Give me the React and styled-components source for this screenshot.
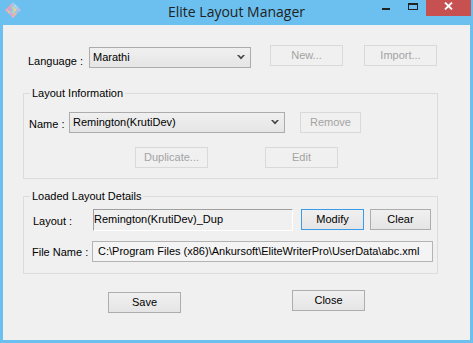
import React from "react";
import styled, { createGlobalStyle } from "styled-components";

const GlobalStyle = createGlobalStyle`
  html, body {
    margin: 0;
    padding: 0;
    background: #6bc0ef;
  }
  body {
    font-family: "Liberation Sans", Arial, sans-serif;
    font-size: 11px;
    color: #000;
  }
  * {
    box-sizing: border-box;
  }
`;

const Window = styled.div`
  width: 473px;
  height: 343px;
  background: #6bc0ef;
  display: flex;
  flex-direction: column;
  padding: 0 3px 3px;
`;

const TitleBar = styled.div`
  height: 25px;
  margin: 0 -3px;
  display: grid;
  grid-template-columns: 1fr auto 1fr;
  align-items: start;
`;

const IconSlot = styled.div`
  padding: 2px 0 0 5px;
  svg {
    display: block;
  }
`;

const Title = styled.div`
  font-family: "Open Sans", "Noto Sans", sans-serif;
  font-size: 14px;
  line-height: 20px;
  padding-top: 2px;
  color: #222;
  white-space: nowrap;
`;

const Controls = styled.div`
  justify-self: end;
  display: flex;
  margin-right: 2px;
`;

const CaptionButton = styled.div`
  width: ${(p) => p.$w}px;
  height: 16px;
  display: flex;
  justify-content: center;
  align-items: flex-start;
  padding-top: ${(p) => p.$pt}px;
  background: ${(p) => p.$bg || "transparent"};
`;

const MinGlyph = styled.div`
  width: 8px;
  height: 2px;
  background: #222;
`;

const MaxGlyph = styled.div`
  width: 10px;
  height: 7px;
  border: 1px solid #222;
  border-top-width: 2px;
`;

const Client = styled.div`
  flex: 1;
  background: #f0f0f0;
  padding: 20px 0 0 20px;
  display: flex;
  flex-direction: column;
`;

const Row = styled.div`
  display: flex;
  align-items: flex-start;
  margin-top: ${(p) => p.$mt || 0}px;
`;

const Label = styled.span`
  display: block;
  line-height: 13px;
  white-space: nowrap;
  width: ${(p) => p.$w}px;
  margin-left: ${(p) => p.$ml || 0}px;
  margin-top: ${(p) => p.$mt || 0}px;
`;

const Combo = styled.div`
  width: ${(p) => p.$w}px;
  height: 21px;
  margin-top: ${(p) => p.$mt || 0}px;
  border: 1px solid #acacac;
  background: linear-gradient(#f0f0f0, #e5e5e5);
  display: flex;
  align-items: center;
  justify-content: space-between;
  padding: 0 5px 0 3px;
  line-height: 13px;
  white-space: nowrap;
  svg {
    display: block;
  }
`;

const Button = styled.button`
  width: ${(p) => p.$w || 73}px;
  height: 21px;
  margin: ${(p) => p.$mt || 0}px 0 0 ${(p) => p.$ml || 0}px;
  padding: 0;
  font-family: inherit;
  font-size: 11px;
  line-height: 13px;
  color: #000;
  border: 1px solid ${(p) => (p.$focused ? "#3c9be8" : "#adadad")};
  border-radius: 0;
  background: linear-gradient(#f0f0f0, #e5e5e5);
  &:disabled {
    color: #a3a3a3;
    border-color: #d9d9d9;
    background: #f0f0f0;
  }
`;

const Group = styled.fieldset`
  width: 415px;
  min-width: 0;
  margin: ${(p) => p.$mt}px 0 0;
  padding: 0;
  border: 1px solid #dcdcdc;
`;

const Caption = styled.legend`
  margin-left: 6px;
  padding: 0 2px;
  line-height: 13px;
  font-size: 11px;
`;

const GroupBody = styled.div`
  padding: ${(p) => p.$pt}px 0 ${(p) => p.$pb}px;
`;

const SunkenField = styled.div`
  width: ${(p) => p.$w}px;
  height: 22px;
  border-style: solid;
  border-width: 1px;
  border-color: #a0a0a0 #ffffff #ffffff #a0a0a0;
  padding-top: 3px;
  line-height: 13px;
  white-space: nowrap;
`;

const TextField = styled.div`
  width: ${(p) => p.$w}px;
  height: 21px;
  border: 1px solid #b4b4b4;
  background: #f4f4f4;
  display: flex;
  align-items: center;
  padding-left: 5px;
  line-height: 13px;
  white-space: nowrap;
  overflow: hidden;
`;

const ComboArrow = () => (
  <svg width="8" height="5" viewBox="0 0 8 5">
    <path d="M0 0h2l2 2 2-2h2L4 4.5z" fill="#444" />
  </svg>
);

const AppIcon = () => {
  const colors = [
    "#9fc6e4", "#b8d6ea", "#a9cfe9", "#c6b7e4",
    "#e4a9c8", "#b2dcb0", "#f0d38a", "#9cc4ea",
    "#e6a0b8", "#c0a8e6", "#a8dcc4", "#f2b6a0",
    "#f0a6c0", "#e8c0a0", "#d8a8e0", "#eab0b8",
  ];
  return (
    <svg width="16" height="16" viewBox="0 0 16 16">
      <g transform="rotate(45 8 8) translate(2.4 2.4)">
        {colors.map((c, i) => (
          <rect
            key={i}
            x={(i % 4) * 2.8}
            y={Math.floor(i / 4) * 2.8}
            width="2.8"
            height="2.8"
            fill={c}
          />
        ))}
      </g>
    </svg>
  );
};

const CloseX = () => (
  <svg width="9" height="8" viewBox="0 0 9 8">
    <path d="M1 0.5L8 7.5M8 0.5L1 7.5" stroke="#fff" strokeWidth="1.8" />
  </svg>
);

export default function App() {
  return (
    <>
      <GlobalStyle />
      <Window>
        <TitleBar>
          <IconSlot>
            <AppIcon />
          </IconSlot>
          <Title>Elite Layout Manager</Title>
          <Controls>
            <CaptionButton $w={26} $pt={8}>
              <MinGlyph />
            </CaptionButton>
            <CaptionButton $w={27} $pt={3}>
              <MaxGlyph />
            </CaptionButton>
            <CaptionButton $w={45} $pt={2} $bg="#c75050">
              <CloseX />
            </CaptionButton>
          </Controls>
        </TitleBar>

        <Client>
          <Row>
            <Label $ml={5} $w={61} $mt={10}>Language :</Label>
            <Combo $w={162} $mt={2}>
              <span>Marathi</span>
              <ComboArrow />
            </Combo>
            <Button $ml={19} disabled>New...</Button>
            <Button $ml={21} disabled>Import...</Button>
          </Row>

          <Group $mt={19}>
            <Caption>Layout Information</Caption>
            <GroupBody $pt={12} $pb={10}>
              <Row>
                <Label $ml={5} $w={40} $mt={6}>Name :</Label>
                <Combo $w={216}>
                  <span>Remington(KrutiDev)</span>
                  <ComboArrow />
                </Combo>
                <Button $ml={15} $w={61} disabled>Remove</Button>
              </Row>
              <Row $mt={14}>
                <Button $ml={111} disabled>Duplicate...</Button>
                <Button $ml={57} disabled>Edit</Button>
              </Row>
            </GroupBody>
          </Group>

          <Group $mt={11}>
            <Caption>Loaded Layout Details</Caption>
            <GroupBody $pt={6} $pb={11}>
              <Row>
                <Label $ml={9} $w={60} $mt={6}>Layout :</Label>
                <SunkenField $w={200}>Remington(KrutiDev)_Dup</SunkenField>
                <Button $ml={8} $w={63} $focused>Modify</Button>
                <Button $ml={6} $w={61}>Clear</Button>
              </Row>
              <Row $mt={10}>
                <Label $ml={8} $w={60} $mt={5}>File Name :</Label>
                <TextField $w={341}>
                  C:\Program Files (x86)\Ankursoft\EliteWriterPro\UserData\abc.xml
                </TextField>
              </Row>
            </GroupBody>
          </Group>

          <Row $mt={16}>
            <Button $ml={85} $mt={2}>Save</Button>
            <Button $ml={111}>Close</Button>
          </Row>
        </Client>
      </Window>
    </>
  );
}
